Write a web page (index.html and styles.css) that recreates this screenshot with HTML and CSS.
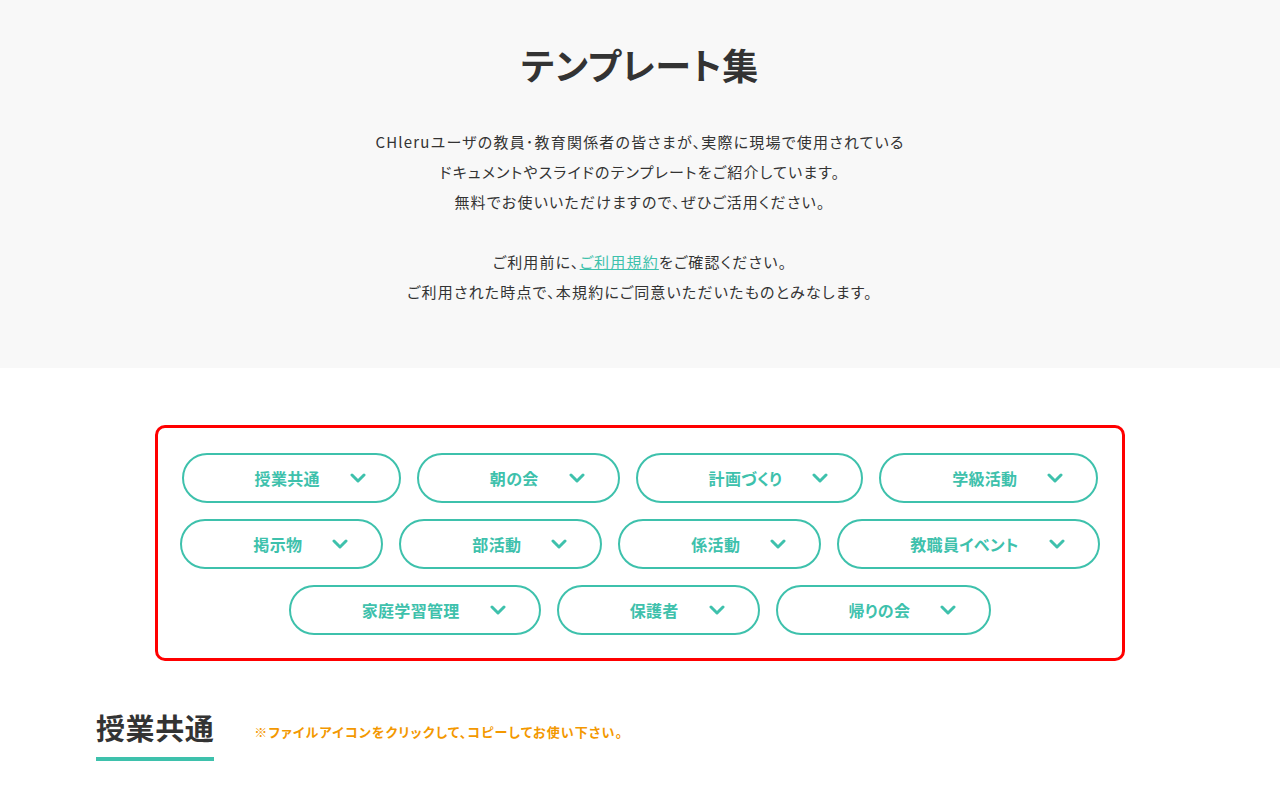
FILE: index.html
```html
<!DOCTYPE html>
<html lang="ja">
<head>
<meta charset="utf-8">
<title>テンプレート集</title>
<link rel="stylesheet" href="styles.css">
</head>
<body>
<section class="hero">
  <h1 class="hero-title">テンプレート集</h1>
  <p class="hero-text">CHleruユーザの教員･教育関係者の皆さまが、実際に現場で使用されている<br>ドキュメントやスライドのテンプレートをご紹介しています。<br>無料でお使いいただけますので、ぜひご活用ください。</p>
  <p class="hero-text hero-terms">ご利用前に、<a class="terms-link" href="#">ご利用規約</a>をご確認ください。<br>ご利用された時点で、本規約にご同意いただいたものとみなします。</p>
</section>

<nav class="cat-box">
  <ul class="cat-list">
    <li><a class="cat-btn" href="#"><span>授業共通</span><svg class="chev" viewBox="0 0 16 10" width="16" height="10"><polyline points="2,2 8,8 14,2"/></svg></a></li>
    <li><a class="cat-btn" href="#"><span>朝の会</span><svg class="chev" viewBox="0 0 16 10" width="16" height="10"><polyline points="2,2 8,8 14,2"/></svg></a></li>
    <li><a class="cat-btn" href="#"><span>計画づくり</span><svg class="chev" viewBox="0 0 16 10" width="16" height="10"><polyline points="2,2 8,8 14,2"/></svg></a></li>
    <li><a class="cat-btn" href="#"><span>学級活動</span><svg class="chev" viewBox="0 0 16 10" width="16" height="10"><polyline points="2,2 8,8 14,2"/></svg></a></li>
    <li><a class="cat-btn" href="#"><span>掲示物</span><svg class="chev" viewBox="0 0 16 10" width="16" height="10"><polyline points="2,2 8,8 14,2"/></svg></a></li>
    <li><a class="cat-btn" href="#"><span>部活動</span><svg class="chev" viewBox="0 0 16 10" width="16" height="10"><polyline points="2,2 8,8 14,2"/></svg></a></li>
    <li><a class="cat-btn" href="#"><span>係活動</span><svg class="chev" viewBox="0 0 16 10" width="16" height="10"><polyline points="2,2 8,8 14,2"/></svg></a></li>
    <li><a class="cat-btn" href="#"><span>教職員イベント</span><svg class="chev" viewBox="0 0 16 10" width="16" height="10"><polyline points="2,2 8,8 14,2"/></svg></a></li>
    <li><a class="cat-btn" href="#"><span>家庭学習管理</span><svg class="chev" viewBox="0 0 16 10" width="16" height="10"><polyline points="2,2 8,8 14,2"/></svg></a></li>
    <li><a class="cat-btn" href="#"><span>保護者</span><svg class="chev" viewBox="0 0 16 10" width="16" height="10"><polyline points="2,2 8,8 14,2"/></svg></a></li>
    <li><a class="cat-btn" href="#"><span>帰りの会</span><svg class="chev" viewBox="0 0 16 10" width="16" height="10"><polyline points="2,2 8,8 14,2"/></svg></a></li>
  </ul>
</nav>

<section class="section">
  <div class="section-head">
    <h2 class="section-title">授業共通</h2>
    <p class="section-note">※ファイルアイコンをクリックして、コピーしてお使い下さい。</p>
  </div>
</section>
</body>
</html>
```

FILE: styles.css
```css
* { box-sizing: border-box; }

body {
  margin: 0;
  background: #ffffff;
  color: #333333;
  font-family: "Noto Sans CJK JP", "Noto Sans", sans-serif;
  font-feature-settings: "palt";
}

.hero {
  background: #f8f8f8;
  height: 368px;
  padding-top: 40px;
  text-align: center;
}

.hero-title {
  margin: 0;
  font-size: 36px;
  line-height: 48px;
  font-weight: 700;
  letter-spacing: 0.02em;
  color: #333333;
}

.hero-text {
  margin: 39px 0 0;
  font-size: 15px;
  line-height: 30px;
  letter-spacing: 0.08em;
  color: #333333;
}

.hero-terms {
  margin-top: 30px;
}

.terms-link {
  color: #3ec1ac;
  text-decoration: underline;
}

.cat-box {
  width: 970px;
  margin: 57px auto 0;
  border: 3px solid #ff0000;
  border-radius: 10px;
  padding: 25px 10px 23px;
}

.cat-list {
  list-style: none;
  margin: 0;
  padding: 0;
  display: flex;
  flex-wrap: wrap;
  justify-content: center;
  gap: 16px;
}

.cat-btn {
  display: flex;
  align-items: center;
  height: 50px;
  padding: 0 33px 0 71px;
  border: 2px solid #3ec1ac;
  border-radius: 25px;
  background: #ffffff;
  color: #3ec1ac;
  font-size: 16px;
  font-weight: 700;
  letter-spacing: 0.02em;
  text-decoration: none;
  white-space: nowrap;
}

.chev {
  margin-left: 30px;
  fill: none;
  stroke: #3ec1ac;
  stroke-width: 3;
  stroke-linecap: round;
  stroke-linejoin: round;
}

.section {
  width: 1088px;
  margin: 46px auto 0;
}

.section-head {
  display: flex;
  align-items: flex-start;
}

.section-title {
  margin: 0;
  font-size: 29px;
  line-height: 40px;
  font-weight: 700;
  letter-spacing: 0.02em;
  color: #333333;
  padding-bottom: 10px;
  border-bottom: 4px solid #3ec1ac;
}

.section-note {
  margin: 15px 0 0 40px;
  font-size: 13px;
  line-height: 20px;
  font-weight: 700;
  letter-spacing: 0.09em;
  color: #f39800;
}
```
